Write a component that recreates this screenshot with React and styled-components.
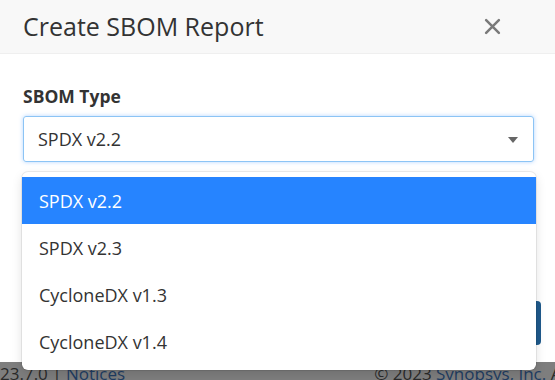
import React from 'react';
import styled, { createGlobalStyle } from 'styled-components';

const options = ['SPDX v2.2', 'SPDX v2.3', 'CycloneDX v1.3', 'CycloneDX v1.4'];

const App = () => {
  const selected = options[0];

  return (
    <>
      <GlobalStyle />
      <Page>
        <Modal>
          <ModalHeader>
            <Title>Create SBOM Report</Title>
            <CloseButton aria-label="Close">
              <svg width="17" height="17" viewBox="0 0 16 16">
                <path d="M2 2 L14 14 M14 2 L2 14" stroke="#7a7a7a" strokeWidth="2.4" strokeLinecap="round" />
              </svg>
            </CloseButton>
          </ModalHeader>
          <ModalBody>
            <Label>SBOM Type</Label>
            <SelectWrap>
              <SelectControl>
                <SelectValue>{selected}</SelectValue>
                <Caret />
              </SelectControl>
              <Menu>
                {options.map((opt) => (
                  <MenuItem key={opt} active={opt === selected}>
                    {opt}
                  </MenuItem>
                ))}
              </Menu>
            </SelectWrap>
            <ModalActions>
              <PrimaryButton>Create</PrimaryButton>
            </ModalActions>
          </ModalBody>
        </Modal>
        <Footer>
          <span>
            23.7.0 | <FooterLink>Notices</FooterLink>
          </span>
          <Copyright>
            © 2023 <FooterLink>Synopsys, Inc.</FooterLink> All rights reserved.
          </Copyright>
        </Footer>
      </Page>
    </>
  );
};

export default App;

const GlobalStyle = createGlobalStyle`
  html, body {
    margin: 0;
    padding: 0;
    background: #7e7e7e;
    overflow: hidden;
  }
  body {
    font-family: "Open Sans", "Liberation Sans", sans-serif;
    color: #333;
  }
  * {
    box-sizing: border-box;
  }
`;

const Page = styled.div`
  width: 555px;
  height: 380px;
  display: flex;
  flex-direction: column;
  overflow: hidden;
`;

const Modal = styled.div`
  height: 362px;
  background: #fff;
  display: flex;
  flex-direction: column;
`;

const ModalHeader = styled.div`
  height: 54px;
  background: #f8f8f8;
  border-bottom: 1px solid #efefef;
  display: flex;
  align-items: center;
  justify-content: space-between;
  padding: 0 54px 0 23px;
`;

const Title = styled.h1`
  margin: 0 0 1px;
  font-size: 25px;
  font-weight: 400;
  color: #333;
`;

const CloseButton = styled.button`
  border: 0;
  background: none;
  padding: 0;
  display: flex;
  cursor: pointer;
`;

const ModalBody = styled.div`
  padding: 30px 21px 0 23px;
  display: flex;
  flex-direction: column;
`;

const Label = styled.label`
  font-size: 17.5px;
  font-weight: 700;
  color: #333;
  line-height: 24px;
  margin-bottom: 8px;
`;

const SelectWrap = styled.div`
  position: relative;
`;

const SelectControl = styled.div`
  height: 46px;
  border: 1px solid #8cc4f5;
  border-radius: 3px;
  box-shadow: 0 0 4px rgba(38, 132, 255, 0.35);
  display: flex;
  align-items: center;
  justify-content: space-between;
  padding: 0 14px 0 14px;
`;

const SelectValue = styled.span`
  font-size: 18px;
  color: #333;
`;

const Caret = styled.span`
  width: 0;
  height: 0;
  border-left: 5px solid transparent;
  border-right: 5px solid transparent;
  border-top: 6px solid #666;
  margin-top: 1px;
  margin-right: 1px;
`;

const Menu = styled.div`
  position: absolute;
  top: 56px;
  left: -1px;
  right: -2px;
  background: #fff;
  border-radius: 6px;
  box-shadow: 0 0 0 1px rgba(0, 0, 0, 0.07), 0 4px 11px rgba(0, 0, 0, 0.12);
  padding: 5px 0 5px;
  z-index: 10;
`;

const MenuItem = styled.div`
  height: 47px;
  display: flex;
  align-items: center;
  padding: 0 17px;
  font-size: 18px;
  background: ${(p) => (p.active ? '#2684ff' : '#fff')};
  color: ${(p) => (p.active ? '#fff' : '#333')};
`;

const ModalActions = styled.div`
  display: flex;
  justify-content: flex-end;
  margin-top: 139px;
  margin-right: -7px;
`;

const PrimaryButton = styled.button`
  height: 44px;
  width: 96px;
  border: 0;
  border-radius: 4px;
  background: #1f5a8c;
  color: #fff;
  font-family: inherit;
  font-size: 16px;
`;

const Footer = styled.div`
  height: 18px;
  background: #7e7e7e;
  display: flex;
  justify-content: space-between;
  align-items: flex-start;
  padding-top: 1px;
  font-size: 17px;
  line-height: 22px;
  color: #2a2a2a;
  white-space: nowrap;
  overflow: hidden;
`;

const FooterLink = styled.span`
  color: #1f3d63;
`;

const Copyright = styled.span`
  margin-left: auto;
  padding-left: 249px;
`;
